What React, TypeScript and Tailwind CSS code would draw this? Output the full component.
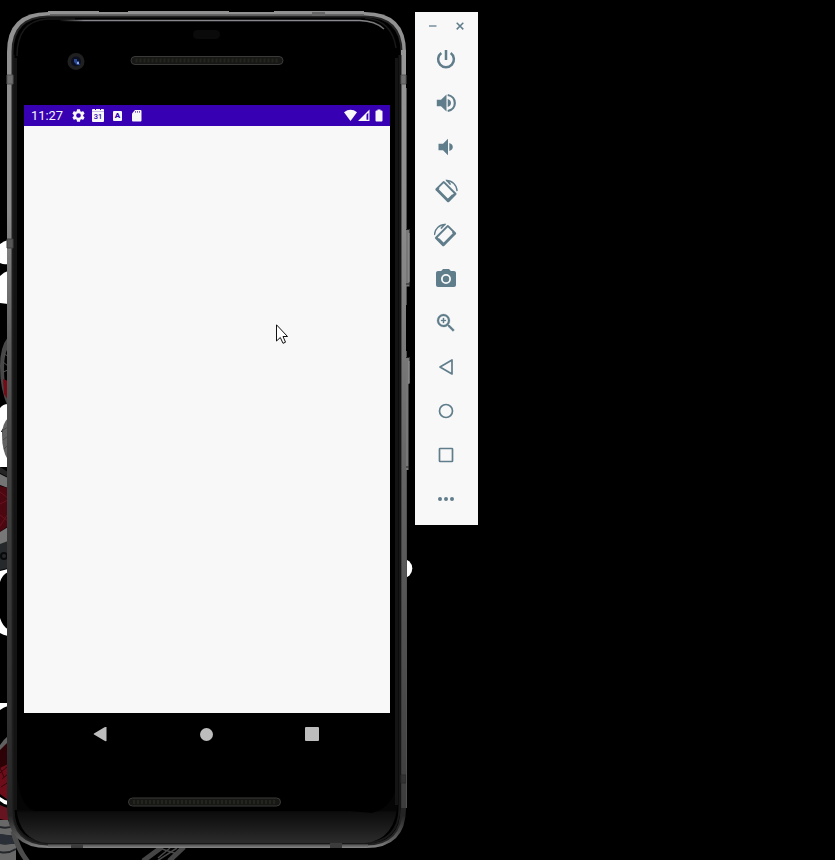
import React from "react";

const ICON = "#607d8b";

function Wallpaper() {
  return (
    <svg className="absolute inset-0" width="835" height="860" viewBox="0 0 835 860" fill="none" aria-hidden="true">
      <g fill="#fff">
        <path d="M0 244Q4 241 8 240V264Q4 265 0 263Z" />
        <path d="M0 276Q4 272 8 271V304L0 303Z" />
        <path d="M0 408Q3 404 8 404V424Q3 427 1 432H0Z" />
        <path d="M0 432H2L8 462V467H0Z" />
        <path d="M0 571Q4 570 8 569V572Q2 575 0 582Z" />
        <path d="M0 618Q3 627 8 629V636Q3 635 0 633Z" />
        <path d="M0 703H8V706Q4 707 0 710Z" />
        <path d="M0 797Q4 800 8 801V805Q3 804 0 801Z" />
        <circle cx="402.500" cy="568.500" r="9.800" />
      </g>
      <path d="M8 337Q0 347 0 366Q0 390 8 407V398Q4 385 4 369Q4 354 8 348Z" fill="#484848" />
      <path d="M3 362L8 366M3 372L8 370M4 354L8 356" stroke="#555" />
      <path d="M3 379L8 381V400L4 394Z" fill="#740c17" />
      <path d="M8 418Q2 424 2 435Q2 451 8 460Z" fill="#626262" />
      <path d="M3 430L8 427M3 440L8 436M4 449L8 445" stroke="#484848" />
      <path d="M0 467L8 472V477L0 473Z" fill="#252525" />
      <path d="M0 474L8 478V488L0 485Z" fill="#747474" />
      <path d="M0 486L8 488V526L0 532Z" fill="#4c0710" />
      <path d="M0 492L8 498M0 504L8 500M0 515L8 521M0 526L8 514" stroke="#6a131d" />
      <path d="M0 532L8 527V542L0 555Z" fill="#777" />
      <path d="M0 544L8 541V568L0 570Z" fill="#26292b" />
      <circle cx="4" cy="556" r="3" stroke="#08090a" strokeWidth="2" />
      <path d="M0 745Q3 740 8 736V744Q3 749 0 754Z" fill="#606060" />
      <path d="M0 752L8 743V800L0 794Z" fill="#6d0d19" />
      <path d="M0 750L8 742V764L0 768Z" fill="#2d0207" />
      <path d="M0 773L8 766M2 779L8 774M1 787L7 783M0 768L4 777" stroke="#35060c" />
      <path d="M0 805Q4 807 8 808V821L0 819Z" fill="#671421" />
      <path d="M0 820H8L16 837V860H0Z" fill="#686868" />
      <path d="M0 827Q8 829 15 825M0 835Q8 837 16 836M0 843Q8 845 16 841M0 852Q8 854 16 849" stroke="#23262a" strokeWidth="2" />
      <path d="M0 834L8 835L15 839V844H0Z" fill="#2a2e36" />
      <path d="M13 831Q18 850 28 862" stroke="#4c4c4c" strokeWidth="5" />
      <path d="M143 861L162 847M169 861L184 847" stroke="#454545" strokeWidth="5" />
      <path d="M157 861L177 848M162 849L177 854M158 858L170 848" stroke="#484848" strokeWidth="1.500" />
    </svg>
  );
}

function Grille({ x, y }: { x: number; y: number }) {
  return (
    <g>
      <rect x={x + 0.5} y={y + 0.5} width="152" height="8" rx="4" fill="#171715" stroke="#3a3a38" />
      <path d={`M${x + 5} ${y + 4.5}H${x + 149}`} stroke="#24241f" strokeWidth="4" strokeDasharray="2 2" />
    </g>
  );
}

function Bezel() {
  return (
    <svg className="absolute -left-[7px] -top-[11px]" width="420" height="860" viewBox="0 0 420 860" fill="none" aria-hidden="true">
      <defs>
        <linearGradient id="rail" gradientUnits="userSpaceOnUse" x1="0" y1="11" x2="0" y2="849">
          <stop stopColor="#929292" />
          <stop offset="0.240" stopColor="#8b8b8b" />
          <stop offset="0.400" stopColor="#5c5c5c" />
          <stop offset="0.550" stopColor="#404040" />
          <stop offset="0.850" stopColor="#303030" />
          <stop offset="0.960" stopColor="#242424" />
          <stop offset="0.990" stopColor="#606060" />
          <stop offset="1" stopColor="#888" />
        </linearGradient>
        <linearGradient id="railRight" gradientUnits="userSpaceOnUse" x1="0" y1="50" x2="0" y2="810">
          <stop stopColor="#979797" />
          <stop offset="0.300" stopColor="#858585" />
          <stop offset="0.560" stopColor="#646464" />
          <stop offset="1" stopColor="#3c3c3c" />
        </linearGradient>
        <linearGradient id="chin" gradientUnits="userSpaceOnUse" x1="0" y1="810" x2="0" y2="843">
          <stop stopColor="#050505" />
          <stop offset="0.080" stopColor="#0d0d0d" />
          <stop offset="0.450" stopColor="#181818" />
          <stop offset="1" stopColor="#2c2c2c" />
        </linearGradient>
        <linearGradient id="gloss" gradientUnits="userSpaceOnUse" x1="58" y1="0" x2="388" y2="0">
          <stop stopColor="#777" stopOpacity="0" />
          <stop offset="0.080" stopColor="#85858b" />
          <stop offset="0.900" stopColor="#898990" />
          <stop offset="1" stopColor="#aaa" stopOpacity="0.600" />
        </linearGradient>
      </defs>
      <path d="M48 11.500H99M128 11.500H229M274 11.500H364" stroke="#909090" />
      <path d="M48 12H365Q406 12 406 52V808Q406 848 366 848H48Q7 848 7 808V52Q7 12 48 12Z" fill="url(#rail)" />
      <path d="M48 16.500H365Q401.500 17 401.500 52V808Q401.500 844.500 366 844.500H48Q12.500 844 12.500 808V52Q12.500 17 48 16.500Z" fill="#000" stroke="#242424" strokeWidth="2" />
      <path d="M403.500 50V808" stroke="url(#railRight)" strokeWidth="5" />
      <path d="M401.500 55V808" stroke="#303030" strokeOpacity="0.600" />
      <path d="M13.500 55V810Q14 842 49 843H365Q399 842 399.500 808V55" stroke="#181818" strokeWidth="2" />
      <path d="M16 770V806Q19 842 49 843H365Q396 840 398 800V780Q394 808 372 813L350 811H35Q20 809 16 770Z" fill="url(#chin)" />
      <path d="M15.500 58V810M396.500 58V805" stroke="#141414" strokeWidth="3" />
      <path d="M17 56Q17 21 47 19H75M365 18Q392 20 396 48" stroke="#181818" strokeWidth="1.500" />
      <path d="M60 20.600H360Q375 21 384 29" stroke="url(#gloss)" strokeWidth="1.500" />
      <path d="M50 14.500H364" stroke="#666" />
      <path d="M48 845.500H368" stroke="#606060" strokeWidth="2" />
      <path d="M7 75H13V84H7ZM401 75H406V84H401Z" fill="#707070" stroke="#555" />
      <path d="M7 239H13V248H7Z" fill="#585858" stroke="#404040" />
      <path d="M401 775H406V783H401Z" fill="#333" stroke="#2a2a2a" />
      <path d="M312 12H325V16H312Z" fill="#666" />
      <path d="M330 843H342V848H330ZM71 844H83V848H71Z" fill="#3c3c3c" />
      <path d="M406.500 88V305M406.500 351V808" stroke="#505050" />
      <path d="M406 229H409.500V286.500H406ZM406 357H409.500V384H408.500V470H406Z" fill="#777" />
      <path d="M406 229.500H409.500M406 284H409.500M406 357.500H409.500M406 467H409" stroke="#222" />
      <path d="M409 233V282M409 361V383" stroke="#999" />
      <rect x="193" y="30" width="27" height="9" rx="4.500" fill="#0a0a0a" />
      <circle cx="76" cy="61.500" r="8.500" fill="#202020" />
      <circle cx="76" cy="61.500" r="5" fill="#0b1020" />
      <path d="M74 59H77V61H79V63L80 65H77L74 62Z" fill="#2b478f" />
      <path d="M77 62H79V64H77Z" fill="#86a9ed" />
      <Grille x={130.5} y={56} />
      <Grille x={128} y={797.5} />
    </svg>
  );
}

function StatusBar() {
  return (
    <div className="flex h-[21px] items-center bg-[#3700b3] pl-[7px] pr-[6px]">
      <span className="w-[41px] whitespace-nowrap pt-px font-['Roboto',sans-serif] text-[12.900px] leading-[20px] text-[#f5f5f5]">11:27</span>
      <svg width="13" height="13" viewBox="2 2 20 20" fill="#f8f8f8">
        <path d="M19.140 12.940c.04-.3.060-.61.060-.94 0-.32-.02-.64-.07-.94l2.030-1.580c.18-.14.230-.41.120-.61l-1.920-3.320c-.12-.22-.37-.29-.59-.22l-2.390.96c-.5-.38-1.030-.7-1.620-.94L14.400 2.810c-.04-.24-.24-.41-.48-.41h-3.840c-.24 0-.43.170-.47.410L9.250 5.350C8.660 5.590 8.120 5.920 7.630 6.290L5.240 5.330c-.22-.08-.47 0-.59.220L2.740 8.870c-.12.210-.08.470.12.610l2.030 1.580c-.05.300-.09.630-.09.940s.02.640.07.940l-2.030 1.580c-.18.140-.23.410-.12.610l1.920 3.320c.12.220.37.290.59.220l2.390-.96c.5.380 1.030.7 1.620.940l.36 2.540c.05.240.24.410.48.410h3.840c.24 0 .44-.17.47-.41l.36-2.540c.59-.24 1.130-.56 1.620-.94l2.390.96c.22.080.47 0 .59-.22l1.920-3.320c.12-.22.070-.47-.12-.61zM12 15.600a3.600 3.600 0 1 1 0-7.200 3.600 3.600 0 0 1 0 7.200z" />
      </svg>
      <div className="ml-[7px] flex h-[13px] w-3 flex-col rounded-[1px] bg-[#f8f8f8] text-center font-['Roboto',sans-serif] text-[7.500px] font-medium leading-[9px] text-[#3700b3]">
        <div className="flex h-[3px] justify-around border-b border-[#cbbce9] px-px">
          <span className="h-px w-px bg-[#3700b3]" />
          <span className="h-px w-px bg-[#3700b3]" />
        </div>
        31
      </div>
      <div className="ml-[9px] h-[10px] w-[9px] rounded-[1px] bg-[#f8f8f8] text-center font-['Roboto',sans-serif] text-[8px] font-black leading-[10px] text-[#3700b3]">A</div>
      <svg className="ml-[9px]" width="11" height="12" viewBox="0 0 11 12" fill="#f8f8f8">
        <path d="M4 0H9.500Q10.500 0 10.500 1V10.500Q10.500 11.500 9.500 11.500H2Q1 11.500 1 10.500V3.500Z" />
        <path d="M4.500 1.200V2.600M6.500 1.200V2.600M8.500 1.200V2.600" stroke="#3700b3" strokeWidth=".8" />
      </svg>
      <svg className="ml-auto" width="40" height="13" viewBox="0 0 40 13" fill="#f8f8f8">
        <path d="M0 3.200Q6.500 -1.500 13 3.200L6.500 12Z" />
        <path fillRule="evenodd" d="M14 12L25.500 .5V12ZM22.500 5.500V10.800H24.300V3.700Z" />
        <path d="M33.500 .5H36.500V1.500H37.500Q38.500 1.500 38.500 2.500V11.500Q38.500 12.500 37.500 12.500H32.500Q31.500 12.500 31.500 11.500V2.500Q31.500 1.500 32.500 1.500H33.500Z" />
      </svg>
    </div>
  );
}

function NavigationBar() {
  return (
    <div className="flex h-[42px] items-center pl-[69px] pr-[71px]">
      <button aria-label="Back">
        <svg width="14" height="16" viewBox="0 0 14 16"><path d="M13.500 1V15Q12.500 15.400 11.500 14.700L1 8.600Q.2 8 1 7.400L11.500 1.300Q12.500.7 13.500 1Z" fill="#bdbdbd" /></svg>
      </button>
      <button className="ml-[93px]" aria-label="Home">
        <span className="block h-[13px] w-[13px] rounded-full bg-[#bdbdbd]" />
      </button>
      <button className="ml-auto" aria-label="Overview">
        <span className="block h-[14px] w-[14px] rounded-[1px] bg-[#bdbdbd]" />
      </button>
    </div>
  );
}

function Phone() {
  return (
    <section className="relative mt-[11px] h-[838px] w-[400px] shrink-0">
      <Bezel />
      <div className="relative pl-[17px] pt-[94px]">
        <div className="w-[366px]">
          <StatusBar />
          <main className="relative h-[587px] bg-[#f8f8f8]">
            <svg className="absolute left-[252px] top-[198px]" width="13" height="21" viewBox="0 0 13 21">
              <path d="M.5.8V17L4.300 13.500L7 19.300L9.500 18.200L7 12.500H11.500Z" fill="#fff" stroke="#111" />
            </svg>
          </main>
          <NavigationBar />
        </div>
      </div>
    </section>
  );
}

function ToolIcon({ label, children }: { label: string; children: React.ReactNode }) {
  return (
    <button className="h-6 w-6" aria-label={label}>
      <svg width="24" height="24" viewBox="0 0 24 24" fill={ICON}>{children}</svg>
    </button>
  );
}

function RotatedDevice() {
  return (
    <g transform="translate(0 .8)">
      <path fillRule="evenodd" d="M8.800 1.600Q9.700.7 10.600 1.600L22.200 13.200Q23.100 14.100 22.200 15L15.100 22.100Q14.200 23 13.300 22.100L1.700 10.500Q.8 9.600 1.700 8.700ZM9.700 3.500L4.200 9L14.300 19.100L19.800 13.600Z" />
      <path d="M1.700 10.500L4.500 7.800L5.500 8.800L3.500 10.800ZM12.700 20L18 14.800L21 15L14.200 22Z" />
      <path d="M12 .7C18.300.6 22.800 5.200 23.100 11.300" fill="none" stroke={ICON} strokeWidth="1.300" />
      <path d="M11.300 0L14.200.3L17.200 4.500L15.900 5.300Z" />
    </g>
  );
}

function EmulatorToolbar() {
  return (
    <aside className="ml-2 mt-3 flex h-[513px] w-[63px] shrink-0 flex-col items-center bg-[#f8f8f8] pr-px">
      <div className="flex h-[35px] w-full items-start pl-[14px] pt-[10px]">
        <button aria-label="Minimize"><svg width="8" height="9" viewBox="0 0 8 9"><path d="M0 4H7.500" stroke="#8da2ac" strokeWidth="1.800" /></svg></button>
        <button className="ml-[19px]" aria-label="Close"><svg width="8" height="9" viewBox="0 0 8 9"><path d="M.7.8L7.300 7.400M7.300.8L.7 7.400" stroke={ICON} strokeWidth="1.500" /></svg></button>
      </div>
      <nav className="flex flex-col gap-5">
        <ToolIcon label="Power">
          <path d="M12 3V13M7.300 6A7.900 7.900 0 1 0 16.700 6" fill="none" stroke={ICON} strokeWidth="2.500" />
        </ToolIcon>
        <ToolIcon label="Volume up">
          <path d="M2.800 8.700V15.300H7L12.500 20.500V3.500L7 8.700ZM13.700 8V16Q17 14.800 17 12Q17 9.200 13.700 8Z" />
          <path d="M13.700 4C23.200 5.500 23.200 18.500 13.700 20" fill="none" stroke={ICON} strokeWidth="2.200" />
        </ToolIcon>
        <ToolIcon label="Volume down"><path d="M4.500 8.700V15.300H9L14 20.200V3.800L9 8.700ZM15.300 8V16Q18.800 14.800 18.800 12Q18.800 9.200 15.300 8Z" /></ToolIcon>
        <ToolIcon label="Rotate left"><RotatedDevice /></ToolIcon>
        <ToolIcon label="Rotate right"><g transform="translate(23.500 0) scale(-1 1)"><RotatedDevice /></g></ToolIcon>
        <ToolIcon label="Take screenshot">
          <path d="M12 8.800a3.200 3.200 0 1 0 0 6.400 3.200 3.200 0 0 0 0-6.400zM9 2L7.170 4H4c-1.100 0-2 .9-2 2v12c0 1.100.9 2 2 2h16c1.100 0 2-.9 2-2V6c0-1.100-.9-2-2-2h-3.170L15 2H9zm3 15a5 5 0 1 1 0-10 5 5 0 0 1 0 10z" />
        </ToolIcon>
        <ToolIcon label="Zoom in">
          <path d="M15.500 14h-.79l-.28-.27A6.470 6.470 0 0 0 16 9.500 6.500 6.500 0 1 0 9.500 16c1.610 0 3.090-.59 4.230-1.570l.27.280v.79l5 4.990L20.490 19l-4.990-5zm-6 0a4.500 4.500 0 1 1 0-9 4.500 4.500 0 0 1 0 9zM10.100 7H8.900v1.900H7v1.200h1.900v1.900h1.200v-1.900h1.900V8.900h-1.900z" stroke={ICON} strokeWidth=".25" />
        </ToolIcon>
        <ToolIcon label="Back"><path d="M18 5V19L6 12Z" fill="none" stroke={ICON} strokeWidth="1.700" strokeLinejoin="round" /></ToolIcon>
        <ToolIcon label="Home"><circle cx="12" cy="12" r="6.500" fill="none" stroke={ICON} strokeWidth="1.700" /></ToolIcon>
        <ToolIcon label="Overview"><rect x="5.500" y="5.500" width="13" height="13" rx=".6" fill="none" stroke={ICON} strokeWidth="1.700" /></ToolIcon>
        <ToolIcon label="More"><path d="M6 10a2 2 0 1 0 0 4 2 2 0 0 0 0-4zm6 0a2 2 0 1 0 0 4 2 2 0 0 0 0-4zm6 0a2 2 0 1 0 0 4 2 2 0 0 0 0-4z" /></ToolIcon>
      </nav>
    </aside>
  );
}

export default function App() {
  return (
    <div className="relative h-[860px] w-[835px] overflow-hidden bg-black">
      <Wallpaper />
      <div className="relative flex items-start pl-[7px]">
        <Phone />
        <EmulatorToolbar />
      </div>
    </div>
  );
}
